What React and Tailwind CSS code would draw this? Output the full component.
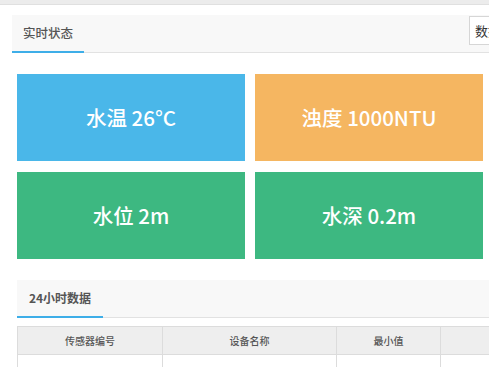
import React from "react";

const font = { fontFamily: '"Noto Sans CJK SC", "Noto Sans", sans-serif' };

function Tile({ color, children }) {
  return (
    <div className={`h-[87px] flex items-center justify-center text-white text-[20.5px] font-medium ${color}`}>
      {children}
    </div>
  );
}

export default function App() {
  return (
    <div className="w-[489px] h-[367px] overflow-hidden bg-white" style={font}>
      <div className="h-[5px] bg-[#ececec] border-b border-[#e0e0e0]" />
      <div className="pl-[12px] pt-[10px]">
        <div className="h-[38px] bg-[#f8f8f8] border-b border-[#e2e2e2] flex items-stretch">
          <div className="w-[72px] flex items-center justify-center text-[12.5px] font-medium text-[#555] border-b-2 border-[#3eaee8] -mb-px">
            实时状态
          </div>
          <div className="ml-auto mr-[-60px] mt-px w-[80px] h-[29px] bg-white border border-[#d6d6d6] flex items-center pl-[5px] text-[13px] text-[#333] whitespace-nowrap">
            数据导出
          </div>
        </div>
        <div className="ml-[5px] mr-[6px] mt-[21px] grid grid-cols-2 gap-x-[10px] gap-y-[11px]">
          <Tile color="bg-[#4ab7e9]">水温 26°C</Tile>
          <Tile color="bg-[#f5b661]">浊度 1000NTU</Tile>
          <Tile color="bg-[#3db881]">水位 2m</Tile>
          <Tile color="bg-[#3db881]">水深 0.2m</Tile>
        </div>
      </div>
      <div className="ml-[17px] mt-[21px]">
        <div className="h-[38px] bg-[#f8f8f8] border-b border-[#e2e2e2] flex items-stretch">
          <div className="w-[86px] flex items-center justify-center text-[12px] font-bold text-[#555] border-b-2 border-[#3eaee8] -mb-px">
            24小时数据
          </div>
        </div>
        <div className="mt-[8px] w-[700px] border-l border-t border-[#dcdcdc] text-[10px] font-medium text-[#555]">
          <div className="flex h-[28px] bg-[#eeeeee] border-b border-[#dcdcdc]">
            <div className="w-[145px] border-r border-[#dcdcdc] flex items-center justify-center">传感器编号</div>
            <div className="w-[174px] border-r border-[#dcdcdc] flex items-center justify-center">设备名称</div>
            <div className="w-[104px] border-r border-[#dcdcdc] flex items-center justify-center">最小值</div>
            <div className="flex-1 flex items-center justify-center">最大值</div>
          </div>
          <div className="flex h-[28px] bg-white">
            <div className="w-[145px] border-r border-[#dcdcdc] flex items-center justify-center pt-[12px]">SN-001</div>
            <div className="w-[174px] border-r border-[#dcdcdc] flex items-center justify-center pt-[12px]">水温</div>
            <div className="w-[104px] border-r border-[#dcdcdc] flex items-center justify-center pt-[12px]">0.0</div>
            <div className="flex-1 flex items-center justify-center pt-[12px]">26</div>
          </div>
        </div>
      </div>
    </div>
  );
}
